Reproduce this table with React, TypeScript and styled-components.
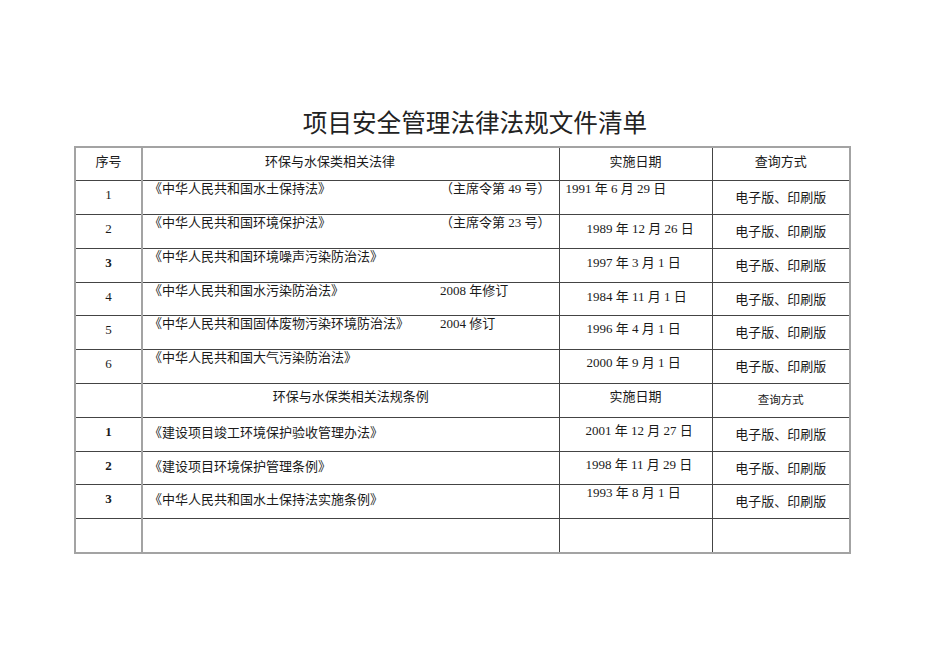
import styled, { createGlobalStyle } from "styled-components";

const GlobalStyle = createGlobalStyle`
  html, body {
    margin: 0;
    padding: 0;
    background: #ffffff;
  }
  body {
    font-family: "Liberation Serif", "Noto Sans CJK SC", serif;
    color: #1a1a1a;
  }
`;

interface ICellProps {
  $align?: "left" | "center";
  $top?: number;
  $indent?: number;
  $bold?: boolean;
  $small?: boolean;
}

interface ILawRow {
  no: string;
  bold: boolean;
  name: string;
  note?: string;
  nameTop: number;
  date: string;
  dateTop: number;
  dateIndent: number;
}

const Page = styled.div`
  width: 950px;
  min-height: 672px;
  padding-top: 104px;
  box-sizing: border-box;
`;

const Title = styled.h1`
  margin: 0 0 8px;
  text-align: center;
  font-family: "Noto Sans CJK SC", sans-serif;
  font-weight: 400;
  font-size: 24.6px;
  line-height: 34px;
  color: #222;
`;

const Sheet = styled.table`
  margin-left: 74px;
  width: 775px;
  border-collapse: collapse;
  table-layout: fixed;
  border: 2px solid #a3a3a3;
`;

const Row = styled.tr`
  height: 33.8px;
`;

const Cell = styled.td<ICellProps>`
  box-sizing: border-box;
  padding: ${(p) => p.$top ?? 0}px 0 0 ${(p) => p.$indent ?? 0}px;
  vertical-align: top;
  text-align: ${(p) => p.$align ?? "left"};
  font-size: ${(p) => (p.$small ? 11.5 : 13)}px;
  line-height: 16px;
  font-weight: ${(p) => (p.$bold ? 700 : 400)};
  border: 1px solid #444;
  white-space: nowrap;

  &:first-child {
    border-right: 2px solid #a3a3a3;
  }
`;

const LawName = styled.span`
  display: inline-block;
  width: 291px;
`;

const LawNote = styled.span`
  display: inline-block;
`;

const laws: ILawRow[] = [
  {
    no: "1",
    bold: false,
    name: "《中华人民共和国水土保持法》",
    note: "（主席令第 49 号）",
    nameTop: 0,
    date: "1991 年 6 月 29 日",
    dateTop: 0,
    dateIndent: 6,
  },
  {
    no: "2",
    bold: false,
    name: "《中华人民共和国环境保护法》",
    note: "（主席令第 23 号）",
    nameTop: 0,
    date: "1989 年 12 月 26 日",
    dateTop: 6,
    dateIndent: 27,
  },
  {
    no: "3",
    bold: true,
    name: "《中华人民共和国环境噪声污染防治法》",
    nameTop: 0,
    date: "1997 年 3 月 1 日",
    dateTop: 6,
    dateIndent: 27,
  },
  {
    no: "4",
    bold: false,
    name: "《中华人民共和国水污染防治法》",
    note: "2008 年修订",
    nameTop: 0,
    date: "1984 年 11 月 1 日",
    dateTop: 6,
    dateIndent: 27,
  },
  {
    no: "5",
    bold: false,
    name: "《中华人民共和国固体废物污染环境防治法》",
    note: "2004 修订",
    nameTop: 0,
    date: "1996 年 4 月 1 日",
    dateTop: 5,
    dateIndent: 27,
  },
  {
    no: "6",
    bold: false,
    name: "《中华人民共和国大气污染防治法》",
    nameTop: 0,
    date: "2000 年 9 月 1 日",
    dateTop: 5,
    dateIndent: 27,
  },
];

const rules: ILawRow[] = [
  {
    no: "1",
    bold: true,
    name: "《建设项目竣工环境保护验收管理办法》",
    nameTop: 7,
    date: "2001 年 12 月 27 日",
    dateTop: 5,
    dateIndent: 26,
  },
  {
    no: "2",
    bold: true,
    name: "《建设项目环境保护管理条例》",
    nameTop: 7,
    date: "1998 年 11 月 29 日",
    dateTop: 5,
    dateIndent: 26,
  },
  {
    no: "3",
    bold: true,
    name: "《中华人民共和国水土保持法实施条例》",
    nameTop: 7,
    date: "1993 年 8 月 1 日",
    dateTop: 0,
    dateIndent: 27,
  },
];

const LawRow = ({ row }: { row: ILawRow }) => (
  <Row>
    <Cell $align="center" $top={6} $bold={row.bold}>
      {row.no}
    </Cell>
    <Cell $top={row.nameTop} $indent={6}>
      <LawName>{row.name}</LawName>
      {row.note && <LawNote>{row.note}</LawNote>}
    </Cell>
    <Cell $top={row.dateTop} $indent={row.dateIndent}>
      {row.date}
    </Cell>
    <Cell $align="center" $top={9}>
      电子版、印刷版
    </Cell>
  </Row>
);

const App = () => {
  return (
    <Page>
      <GlobalStyle />
      <Title>项目安全管理法律法规文件清单</Title>
      <Sheet>
        <colgroup>
          <col style={{ width: 67 }} />
          <col style={{ width: 417 }} />
          <col style={{ width: 153 }} />
          <col style={{ width: 138 }} />
        </colgroup>
        <tbody>
          <Row>
            <Cell $align="center" $top={6}>
              序号
            </Cell>
            <Cell $top={6} $indent={122}>
              环保与水保类相关法律
            </Cell>
            <Cell $align="center" $top={6}>
              实施日期
            </Cell>
            <Cell $align="center" $top={6}>
              查询方式
            </Cell>
          </Row>
          {laws.map((row) => (
            <LawRow key={"law" + row.no} row={row} />
          ))}
          <Row>
            <Cell />
            <Cell $align="center" $top={5}>
              环保与水保类相关法规条例
            </Cell>
            <Cell $align="center" $top={5}>
              实施日期
            </Cell>
            <Cell $align="center" $top={8} $small>
              查询方式
            </Cell>
          </Row>
          {rules.map((row) => (
            <LawRow key={"rule" + row.no} row={row} />
          ))}
          <Row>
            <Cell />
            <Cell />
            <Cell />
            <Cell />
          </Row>
        </tbody>
      </Sheet>
    </Page>
  );
};

export default App;
